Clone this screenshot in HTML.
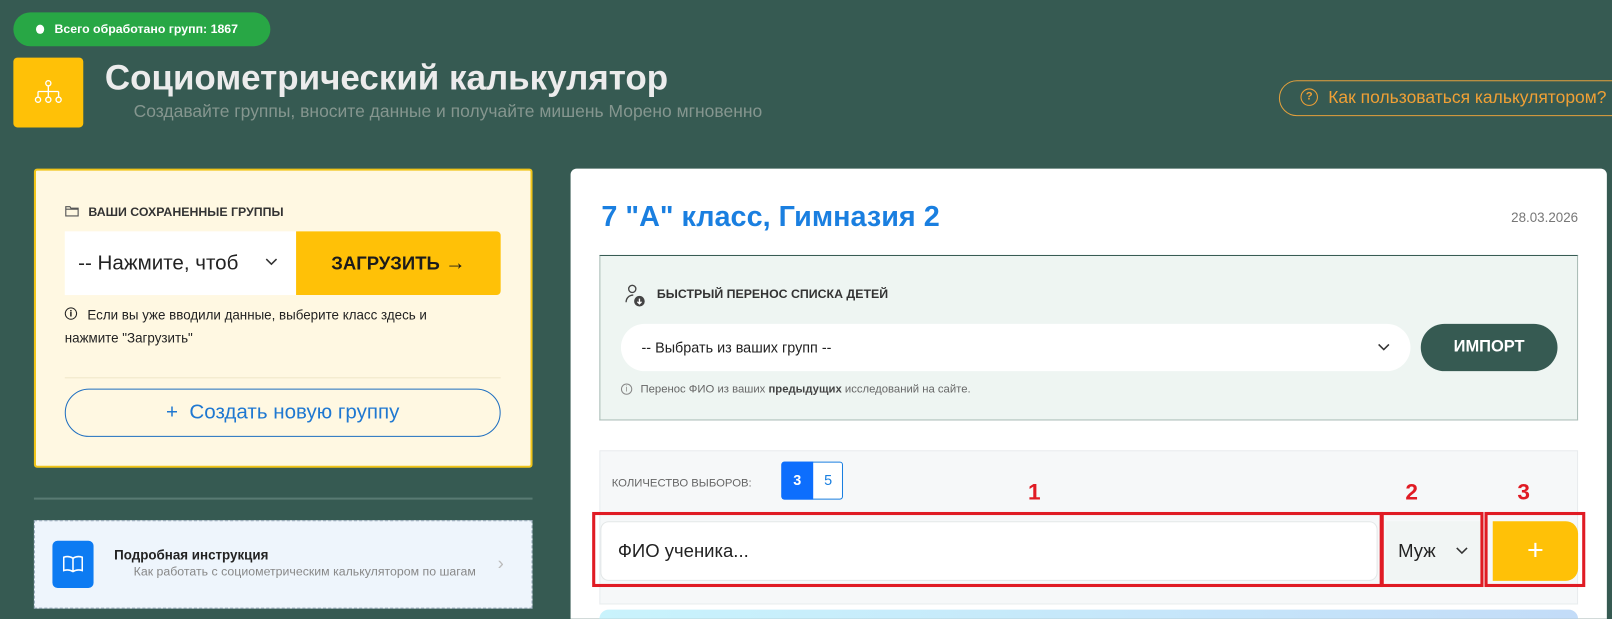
<!DOCTYPE html>
<html style="width:1612px;height:619px;overflow:hidden"><head><meta charset="utf-8"><style>
*{box-sizing:border-box;margin:0;padding:0}
body{width:1612px;height:619px;overflow:hidden;background:#365a52;font-family:"Liberation Sans",sans-serif;position:relative}
#w{position:absolute;left:0;top:0;width:1568px;height:602px;overflow:hidden;transform:scale(1.02806);transform-origin:0 0}
.a{position:absolute}
</style></head><body><div id="w">
<div class="a" style="left:13px;top:12px;width:250px;height:33px;background:#28a745;border-radius:17px;color:#fff;font-size:12px;font-weight:bold;line-height:33px;padding-left:40px">Всего обработано групп: 1867</div>
<div class="a" style="left:35px;top:24px;width:8px;height:9px;background:#fff;border-radius:50%"></div>
<div class="a" style="left:13px;top:56px;width:68px;height:68px;background:#ffc107;border-radius:4px"></div>
<svg class="a" style="left:32px;top:77px" width="30" height="26" viewBox="0 0 30 26" fill="none" stroke="#fff" stroke-width="1.3"><circle cx="15" cy="4" r="2.5"/><path d="M15 7v5M5 12h20M5 12v5M15 12v5M25 12v5"/><circle cx="5" cy="20" r="2.5"/><circle cx="15" cy="20" r="2.5"/><circle cx="25" cy="20" r="2.5"/></svg>
<div class="a" style="left:102px;top:57px;font-size:34px;font-weight:bold;color:#ececec">Социометрический калькулятор</div>
<div class="a" style="left:130px;top:99px;font-size:17px;color:#85968f">Создавайте группы, вносите данные и получайте мишень Морено мгновенно</div>
<div class="a" style="left:1244px;top:78px;width:380px;height:35px;border:1.5px solid #e3a03c;border-radius:18px;color:#f0a035;font-size:17px;line-height:32px;padding-left:47px">Как пользоваться калькулятором?</div>
<div class="a" style="left:1265px;top:86px;width:17px;height:17px;border:1.5px solid #f0a035;border-radius:50%;color:#f0a035;font-size:11px;font-weight:bold;text-align:center;line-height:14px">?</div>

<div class="a" style="left:33px;top:164px;width:485px;height:291px;background:#fff8e2;border:2px solid #f0c419;border-radius:3px"></div>
<svg class="a" style="left:63px;top:199px" width="14" height="12" viewBox="0 0 14 12" fill="none" stroke="#555" stroke-width="1.1"><path d="M1 2h4l1 1.5h7V11H1z M1 4.5h12"/></svg>
<div class="a" style="left:86px;top:199px;font-size:12px;font-weight:bold;color:#333">ВАШИ СОХРАНЕННЫЕ ГРУППЫ</div>
<div class="a" style="left:63px;top:225px;width:225px;height:62px;background:#fff;font-size:20px;color:#222;line-height:62px;padding-left:13px">-- Нажмите, чтоб</div>
<svg class="a" style="left:257px;top:250px" width="14" height="10" viewBox="0 0 14 10" fill="none" stroke="#333" stroke-width="1.5"><path d="M2 2l5 5 5-5"/></svg>
<div class="a" style="left:288px;top:225px;width:199px;height:62px;background:#ffc107;border-radius:0 4px 4px 0;font-size:18px;font-weight:bold;color:#1b1b1b;line-height:62px;text-align:center">ЗАГРУЗИТЬ <span style="font-weight:normal;font-size:20px">→</span></div>
<div class="a" style="left:63px;top:299px;width:12px;height:12px;border:1.2px solid #222;border-radius:50%;font-size:9px;text-align:center;line-height:10px;font-weight:bold">i</div>
<div class="a" style="left:63px;top:296px;font-size:13px;color:#222;line-height:22px;width:395px;text-indent:22px">Если вы уже вводили данные, выберите класс здесь и нажмите "Загрузить"</div>
<div class="a" style="left:63px;top:367px;width:424px;height:1px;background:#f0e6c8"></div>
<div class="a" style="left:63px;top:378px;width:424px;height:47px;border:1.3px solid #1f6fc0;border-radius:24px;color:#1f78d1;font-size:20px;text-align:center;line-height:45px">+&nbsp; Создать новую группу</div>

<div class="a" style="left:33px;top:484px;width:485px;height:2px;background:#587a72"></div>
<div class="a" style="left:33px;top:506px;width:485px;height:86px;background:#eef5fc;border:1px dashed #9ab"></div>
<div class="a" style="left:51px;top:526px;width:40px;height:46px;background:#0d7bf2;border-radius:5px"></div>
<svg class="a" style="left:61px;top:540px" width="20" height="18" viewBox="0 0 20 18" fill="none" stroke="#fff" stroke-width="1.5"><path d="M10 3C7 1 4 1 1 2v13c3-1 6-1 9 1 3-2 6-2 9-1V2c-3-1-6-1-9 1zM10 3v13"/></svg>
<div class="a" style="left:111px;top:532px;font-size:13px;font-weight:bold;color:#222">Подробная инструкция</div>
<div class="a" style="left:130px;top:549px;font-size:12px;color:#888">Как работать с социометрическим калькулятором по шагам</div>
<div class="a" style="left:484px;top:538px;font-size:18px;color:#bbb">›</div>

<div class="a" style="left:555px;top:164px;width:1008px;height:438px;background:#fff;border-radius:6px 6px 0 0"></div>
<div class="a" style="left:585px;top:195px;font-size:28px;font-weight:bold;color:#1a7fe0">7 "А" класс, Гимназия 2</div>
<div class="a" style="left:1440px;top:204px;width:95px;text-align:right;font-size:13px;color:#777">28.03.2026</div>
<div class="a" style="left:583px;top:248px;width:952px;height:161px;background:#eef5f2;border:1px solid #a9bcb6;border-top:1.5px solid #365a52"></div>
<svg class="a" style="left:606px;top:275px" width="24" height="24" viewBox="0 0 24 24" fill="none" stroke="#444" stroke-width="1.3"><circle cx="9" cy="6" r="3.5"/><path d="M3 19c0-4 3-7 7-7"/><circle cx="16" cy="18" r="4.5" fill="#444"/><path d="M16 15.5v5M14 18.5l2 2 2-2" stroke="#fff"/></svg>
<div class="a" style="left:639px;top:279px;font-size:12px;font-weight:bold;color:#333">БЫСТРЫЙ ПЕРЕНОС СПИСКА ДЕТЕЙ</div>
<div class="a" style="left:604px;top:315px;width:768px;height:46px;background:#fff;border-radius:23px;font-size:14px;color:#222;line-height:46px;padding-left:20px">-- Выбрать из ваших групп --</div>
<svg class="a" style="left:1339px;top:333px" width="14" height="10" viewBox="0 0 14 10" fill="none" stroke="#333" stroke-width="1.5"><path d="M2 2l5 5 5-5"/></svg>
<div class="a" style="left:1382px;top:315px;width:133px;height:46px;background:#365a52;border-radius:23px;color:#fff;font-size:16px;font-weight:bold;line-height:46px;text-align:center">ИМПОРТ</div>
<div class="a" style="left:604px;top:373px;width:11px;height:11px;border:1px solid #888;border-radius:50%;font-size:8px;text-align:center;line-height:9px;color:#888">i</div>
<div class="a" style="left:623px;top:373px;font-size:11px;color:#666">Перенос ФИО из ваших <b style="color:#444">предыдущих</b> исследований на сайте.</div>

<div class="a" style="left:583px;top:438px;width:952px;height:150px;background:#f6f8f9;border:1px solid #e8ecee"></div>
<div class="a" style="left:595px;top:464px;font-size:11px;color:#666">КОЛИЧЕСТВО ВЫБОРОВ:</div>
<div class="a" style="left:760px;top:449px;width:60px;height:37px;border:1px solid #1a7fe0;border-radius:3px;background:#fff"></div>
<div class="a" style="left:760px;top:449px;width:31px;height:37px;background:#0d6efd;border-radius:3px 0 0 3px;color:#fff;font-size:14px;font-weight:bold;text-align:center;line-height:37px">3</div>
<div class="a" style="left:791px;top:449px;width:29px;height:37px;color:#1a7fe0;font-size:14px;text-align:center;line-height:37px">5</div>
<div class="a" style="left:584px;top:507px;width:756px;height:58px;background:#fff;border:1px solid #e4e8e8;border-radius:8px;font-size:18px;color:#222;line-height:56px;padding-left:16px">ФИО ученика...</div>
<div class="a" style="left:1348px;top:507px;width:92px;height:58px;background:#f1f5f4;font-size:18px;color:#222;line-height:58px;padding-left:12px">Муж</div>
<svg class="a" style="left:1415px;top:531px" width="14" height="10" viewBox="0 0 14 10" fill="none" stroke="#333" stroke-width="1.5"><path d="M2 2l5 5 5-5"/></svg>
<div class="a" style="left:1452px;top:507px;width:83px;height:58px;background:#ffc107;border-radius:0 12px 12px 0;color:#fff;font-size:28px;text-align:center;line-height:56px">+</div>
<div class="a" style="left:576px;top:498px;width:769px;height:73px;border:3.5px solid #e01b24"></div>
<div class="a" style="left:1343px;top:498px;width:100px;height:73px;border:3.5px solid #e01b24"></div>
<div class="a" style="left:1444px;top:498px;width:98px;height:73px;border:3.5px solid #e01b24"></div>
<div class="a" style="left:1000px;top:466px;font-size:22px;font-weight:bold;color:#e01b24">1</div>
<div class="a" style="left:1367px;top:466px;font-size:22px;font-weight:bold;color:#e01b24">2</div>
<div class="a" style="left:1476px;top:466px;font-size:22px;font-weight:bold;color:#e01b24">3</div>
<div class="a" style="left:583px;top:593px;width:952px;height:9px;background:linear-gradient(90deg,#c9f3fc,#c3dcf8);border-radius:10px 10px 0 0"></div>
</div></body></html>
